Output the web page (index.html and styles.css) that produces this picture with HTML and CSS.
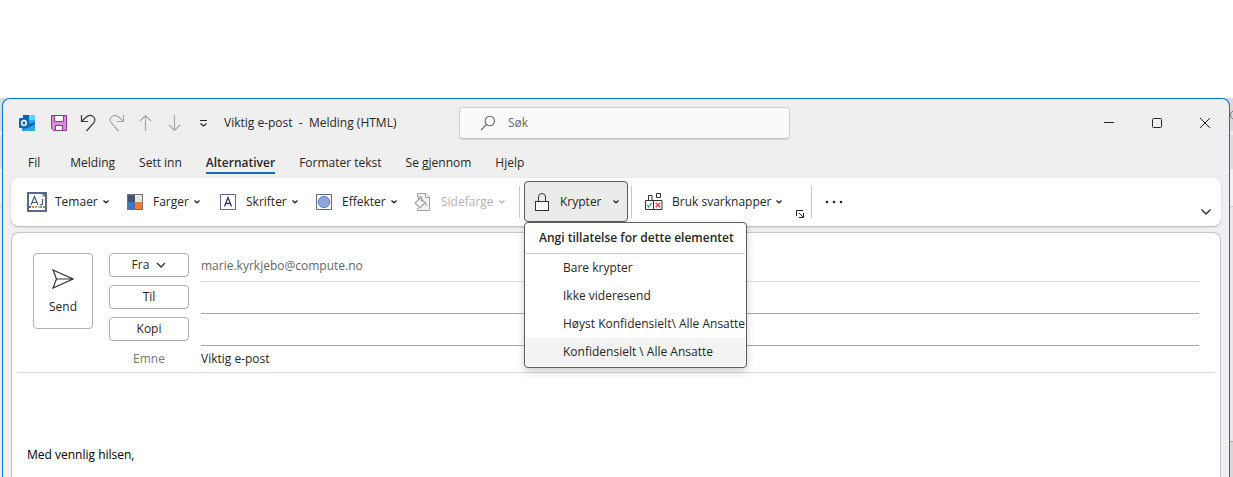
FILE: index.html
```html
<!DOCTYPE html>
<html lang="no">
<head>
<meta charset="utf-8">
<title>Viktig e-post - Melding (HTML)</title>
<link rel="stylesheet" href="styles.css">
</head>
<body>
<svg class="defs" aria-hidden="true">
  <symbol id="chevron" viewBox="0 0 8 8"><path d="M1.500 2.500 4 4.800 6.500 2.500" fill="none" stroke="currentColor" stroke-width="1.300"/></symbol>
</svg>
<div class="desktop">
<main class="window">
  <header class="titlebar">
    <svg class="app-logo" viewBox="0 0 16 16" aria-hidden="true">
      <rect x="4" y="0" width="12" height="8" fill="#28a8ea"/><rect x="4" y="0" width="6" height="5" fill="#0364b8"/><rect x="10" y="0" width="6" height="5" fill="#50d9ff"/><rect x="4" y="5" width="6" height="5" fill="#0078d4"/>
      <path d="M3 8h13v7a1 1 0 0 1-1 1H4a1 1 0 0 1-1-1z" fill="#1490df"/><path d="M16 7v8.500L7 10.500z" fill="#0f5fa8"/><path d="M4 16 16 9v6a1 1 0 0 1-1 1z" fill="#28a8ea"/>
      <rect x="0" y="3" width="10" height="10" rx="1" fill="#0f64b4"/><ellipse cx="5" cy="8" rx="2.200" ry="2.500" fill="none" stroke="#fff" stroke-width="1.500"/>
    </svg>
    <div class="quick">
      <button aria-label="Lagre"><svg viewBox="0 0 18 18"><path d="M1.500 1.500h15v15h-13l-2-2z" fill="#d68fd6" stroke="#9332a0"/><path d="M4.500 1.500h9v6h-9z" fill="#fff" stroke="#9332a0"/><path d="M5.500 11.500h7v5h-7z" fill="#fff" stroke="#9332a0"/></svg></button>
      <button aria-label="Angre"><svg viewBox="0 0 18 18" fill="none" stroke="#3b3b3b" stroke-width="1.200"><path d="M2.500 1v6.500H9M2.500 7.500 7 3.200c5-4.500 11.500 1 7.500 6L7.500 17"/></svg></button>
      <button aria-label="Gjør om"><svg viewBox="0 0 18 18" fill="none" stroke="#a8a8a8" stroke-width="1.200"><path d="M15.500 1v6.500H9M15.500 7.500 11 3.200c-5-4.500-11.500 1-7.500 6l7 7.800"/></svg></button>
      <button aria-label="Forrige element"><svg viewBox="0 0 18 18" fill="none" stroke="#a8a8a8" stroke-width="1.200"><path d="M8.500 17V1.500M3 7l5.500-5.500L14 7"/></svg></button>
      <button aria-label="Neste element"><svg viewBox="0 0 18 18" fill="none" stroke="#a8a8a8" stroke-width="1.200"><path d="M8.500 1v15.500M3 11l5.500 5.500L14 11"/></svg></button>
      <button aria-label="Tilpass verktøylinjen"><svg viewBox="0 0 18 18" fill="none" stroke="#262626" stroke-width="1.200"><path d="M5 6.500h7M5.500 9.500l3 2.500 3-2.500"/></svg></button>
    </div>
    <h1 class="title">Viktig e-post&nbsp; -&nbsp; Melding (HTML)</h1>
    <label class="search">
      <svg viewBox="0 0 16 16" fill="none" stroke="#666" stroke-width="1.100"><circle cx="9.800" cy="6" r="4.700"/><path d="M6.500 9.500 1 15"/></svg>
      <input type="text" placeholder="Søk" aria-label="Søk">
    </label>
    <div class="controls">
      <button aria-label="Minimer"><svg viewBox="0 0 12 12"><path d="M1 5.500h10"/></svg></button>
      <button aria-label="Maksimer"><svg viewBox="0 0 12 12"><rect x="1.500" y="1.500" width="9" height="9" rx="1"/></svg></button>
      <button aria-label="Lukk"><svg viewBox="0 0 12 12"><path d="m1 1 10 10M11 1 1 11"/></svg></button>
    </div>
  </header>

  <nav class="tabs">
    <button class="file">Fil</button><button>Melding</button><button>Sett inn</button><button class="active">Alternativer</button><button>Formater tekst</button><button>Se gjennom</button><button>Hjelp</button>
  </nav>

  <section class="ribbon" aria-label="Alternativer">
    <button class="cmd themes">
      <svg class="icon" viewBox="0 0 20 20"><path d="M0 0h20v20H0z" fill="#596a86"/><path d="M2 2h13l3 3v13H2z" fill="#fff"/><path d="M15 2v3h3z" fill="#b8c1cf"/><path d="m4 13 3.500-8.500L11 13M5 10.500h5M15.500 7v4.500q0 2-2.500 1" fill="none" stroke="#44546a" stroke-width="1.100"/><path d="M2 14h2v2H2z" fill="#4472c4"/><path d="M5 14h2v2H5z" fill="#ed7d31"/><path d="M8 14h2v2H8z" fill="#a5a5a5"/><path d="M11 14h2v2h-2z" fill="#ffc000"/><path d="M13 14h2v2h-2z" fill="#5b9bd5"/><path d="M16 14h2v2h-2z" fill="#70ad47"/></svg>
      <span>Temaer</span><svg class="chev"><use href="#chevron"/></svg></button>
    <button class="cmd colors">
      <svg class="icon" viewBox="0 0 16 16"><path d="M0 0h16v16H0z" fill="#737373"/><path d="M1 1h7v7H1z" fill="#44546a"/><path d="M8 1h7v7H8z" fill="#e7e6e6"/><path d="M1 8h7v7H1z" fill="#4472c4"/><path d="M8 8h7v7H8z" fill="#ed7d31"/></svg>
      <span>Farger</span><svg class="chev"><use href="#chevron"/></svg></button>
    <button class="cmd fonts">
      <svg class="icon" viewBox="0 0 16 16"><path d="M.5.5h15v15H.5z" fill="#fff" stroke="#596a86"/><path d="m4.500 12.500 3.500-9 3.500 9M5.500 9.500h5" fill="none" stroke="#333b52" stroke-width="1.300"/></svg>
      <span>Skrifter</span><svg class="chev"><use href="#chevron"/></svg></button>
    <button class="cmd effects">
      <svg class="icon" viewBox="0 0 16 16"><path d="M.5.5h15v15H.5z" fill="#fff" stroke="#596a86"/><circle cx="8" cy="8" r="5.700" fill="#8fa5dc" stroke="#5f7fca"/></svg>
      <span>Effekter</span><svg class="chev"><use href="#chevron"/></svg></button>
    <button class="cmd page" disabled>
      <svg class="icon" viewBox="0 0 18 18" fill="none" stroke="#a0a0a0"><path d="M3.500 4V.5H12l3.500 3.500v13.500h-12V15" fill="#f3f3f3"/><path d="M11.500.5v4h4" fill="#fff"/><path d="m1 10 5.500-5 4.500 4.500L6 15zM4.500 7V4.500q1.500-2.500 3 0V9M11 9q1.500 1.500 1 4" stroke-width="1.200" fill="#fff"/></svg>
      <span>Sidefarge</span><svg class="chev"><use href="#chevron"/></svg></button>
    <span class="sep"></span>
    <div class="dropdown">
      <button class="cmd encrypt" aria-expanded="true">
        <svg class="icon" viewBox="0 0 16 20" fill="none" stroke="#333"><rect x="1.500" y="9.500" width="13" height="9" fill="#fafafa"/><path d="M4.500 9V5q0-3.500 3.500-3.500T11.500 5v4"/></svg>
        <span>Krypter</span><svg class="chev"><use href="#chevron"/></svg></button>
      <div class="menu" role="menu">
        <h2>Angi tillatelse for dette elementet</h2>
        <button role="menuitem">Bare krypter</button>
        <button role="menuitem">Ikke videresend</button>
        <button role="menuitem">Høyst Konfidensielt\ Alle Ansatte</button>
        <button role="menuitem" class="hover">Konfidensielt \ Alle Ansatte</button>
      </div>
    </div>
    <span class="sep"></span>
    <button class="cmd voting">
      <svg class="icon" viewBox="0 0 18 20" fill="none" stroke="#333"><path d="M.5 8.500h8v9h-8zM8.500 8.500h8.500v9H8.500z" fill="#fff"/><path d="M3.500 8V3.500h3.500V8M11.500 1.500h4v4h-4z"/><path d="m2.200 13 1.500 2 3-4" stroke="#2ba24c" stroke-width="1.200"/><path d="m10.700 10.700 4.500 4.500m0-4.500-4.500 4.500" stroke="#ee3f43" stroke-width="1.300"/></svg>
      <span>Bruk svarknapper</span><svg class="chev"><use href="#chevron"/></svg></button>
    <button class="launcher" aria-label="Flere alternativer"><svg viewBox="0 0 8 8" fill="none" stroke="#262626"><path d="M.5 6V.5H7M3 3l4 4M7.500 3v4.500H3"/></svg></button>
    <span class="sep"></span>
    <button class="more" aria-label="Flere kommandoer"><svg viewBox="0 0 18 4" fill="#262626"><circle cx="2" cy="2" r="1.300"/><circle cx="9" cy="2" r="1.300"/><circle cx="16" cy="2" r="1.300"/></svg></button>
    <button class="collapse" aria-label="Skjul båndet"><svg viewBox="0 0 12 8" fill="none" stroke="#262626" stroke-width="1.300"><path d="m1.500 1.500 4.500 4.500 4.500-4.500"/></svg></button>
  </section>

  <section class="message">
    <div class="fields">
      <button class="send"><svg viewBox="0 0 22 20" fill="none" stroke="#333" stroke-width="1.200"><path d="m1 1 20 9L1 19l3.500-9zM4.500 10H21"/></svg>Send</button>
      <button class="pick">Fra <svg viewBox="0 0 10 8" fill="none" stroke="#333" stroke-width="1.400"><path d="m1 2 4 4 4-4"/></svg></button>
      <div class="value from">marie.kyrkjebo@compute.no</div>
      <button class="pick">Til</button>
      <input class="value" type="text" aria-label="Til">
      <button class="pick">Kopi</button>
      <input class="value" type="text" aria-label="Kopi">
      <label class="subject-label" for="subject">Emne</label>
      <input class="value subject" id="subject" type="text" value="Viktig e-post">
    </div>
    <p class="body">Med vennlig hilsen,</p>
  </section>
</main>
<div class="behind" aria-hidden="true"><svg viewBox="0 0 3 12" fill="none" stroke="#777"><circle cx="5" cy="6" r="4.500"/></svg></div>
</div>
</body>
</html>
```
FILE: styles.css
```css
* { box-sizing: border-box; }
body {
  margin: 0;
  padding-top: 98px;
  background: #fff;
  color: #262626;
  font: 12px/16px "Open Sans", "Noto Sans", sans-serif;
}
button, input { font: inherit; color: inherit; background: none; border: 0; padding: 0; margin: 0; }
button { display: inline-flex; align-items: center; white-space: nowrap; }
svg { display: block; flex: none; }
.defs { display: none; }

.desktop {
  display: grid;
  grid-template-columns: 1fr 3px;
  min-height: calc(100vh - 98px);
  padding-left: 2px;
  background: linear-gradient(#dadade 33px, #ececec 33px 37px, #dcdcde 37px 71px, #f0f0f0 71px 108px, #c8c8c8 108px 109px, #ececec 109px);
}
.behind {
  padding-top: 11px;
  background: linear-gradient(#dadade 33px, #ececec 33px 37px, #dcdcde 37px 71px, #f0f0f0 71px 108px, #c8c8c8 108px 109px, #e8e6e6 109px 343px, #a8a8a8 343px 344px, #d8d6d6 344px);
}
.behind svg { width: 3px; height: 12px; }
.window {
  display: flex;
  flex-direction: column;
  min-width: 0;
  background: #efefef;
  border: 1px solid #0078d4;
  border-bottom: 0;
  border-radius: 8px 8px 0 0;
}

.titlebar { display: flex; align-items: center; height: 48px; padding-left: 16px; }
.app-logo { width: 16px; height: 16px; }
.quick { display: flex; gap: 11px; margin-left: 15px; }
.quick button, .quick svg { width: 18px; height: 18px; }
.title { margin: 0 0 0 11px; width: 235px; font-size: 12px; line-height: 18px; font-weight: 400; white-space: nowrap; }
.search {
  display: flex;
  align-items: center;
  gap: 12px;
  width: 331px;
  height: 32px;
  padding: 0 20px;
  background: #fafafa;
  border: 1px solid #d0d0d0;
  border-bottom-color: #bdbdbd;
  border-radius: 4px;
  box-shadow: 0 1px 1px #0000001a;
}
.search svg { width: 16px; height: 16px; }
.search input { flex: 1; min-width: 0; outline: 0; }
.search input::placeholder { color: #6b6b6b; opacity: 1; }
.controls { display: flex; margin-left: auto; }
.controls button { width: 48px; height: 32px; justify-content: center; }
.controls svg { width: 12px; height: 12px; fill: none; stroke: #262626; stroke-width: 1; }

.tabs { display: flex; gap: 24px; height: 31px; padding-left: 25px; align-items: flex-start; }
.tabs button { height: 27px; padding-top: 6px; border-bottom: 2px solid transparent; }
.tabs .file { margin-right: 6px; }
.tabs .active { font-weight: 600; border-bottom-color: #0f6cbd; }

.ribbon {
  display: flex;
  align-items: center;
  height: 48px;
  margin: 0 8px;
  padding: 0 9px 0 16px;
  background: #fff;
  border-radius: 8px;
  box-shadow: 0 1px 2px #00000040;
}
.cmd { height: 40px; }
.icon { width: 16px; height: 16px; margin-right: 10px; }
.chev { width: 8px; height: 8px; margin-left: 4px; }
.themes { width: 100px; }
.themes .icon { width: 20px; height: 20px; margin-right: 8px; }
.colors { width: 93px; }
.fonts { width: 96px; }
.effects { width: 98px; }
.page { width: 105px; color: #b3b3b3; }
.page .icon, .voting .icon { width: 18px; height: 18px; margin-right: 9px; }
.voting .icon { height: 20px; }
.sep { width: 1px; height: 32px; background: #c8c8c8; }
.dropdown { position: relative; align-self: flex-start; margin: 3px 3px 0 4px; }
.encrypt { width: 104px; height: 41px; padding: 0 7px 0 9px; background: #ebebeb; border: 1px solid #5c5c5c; border-radius: 4px; }
.encrypt .icon { height: 20px; }
.encrypt .chev { margin-left: auto; }
.menu {
  position: absolute;
  z-index: 1;
  top: 100%;
  left: 0;
  width: 223px;
  padding: 0 1px 1px;
  background: #fff;
  border: 1px solid #5c5c5c;
  border-radius: 4px;
  box-shadow: 0 4px 8px #0000002e;
}
.menu h2 { margin: 0; height: 31px; padding-left: 13px; font-size: 12px; line-height: 30px; font-weight: 600; border-bottom: 1px solid #c8c8c8; white-space: nowrap; }
.menu button { display: flex; width: 100%; height: 28px; padding-left: 37px; }
.menu .hover { background: #f3f3f3; }
.voting { margin-left: 13px; }
.launcher { align-self: flex-end; margin: 0 7px 8px 13px; }
.launcher svg { width: 8px; height: 8px; }
.more { margin-left: 13px; }
.more svg { width: 18px; height: 4px; }
.collapse { align-self: flex-end; margin: 0 0 10px auto; }
.collapse svg { width: 12px; height: 8px; }

.message {
  flex: 1;
  margin: 6px 8px 0;
  padding: 0 5px;
  background: #fff;
  border: 1px solid #c8c8c8;
  border-bottom: 0;
  border-radius: 8px 8px 0 0;
}
.fields {
  display: grid;
  grid-template-columns: 60px 80px 1fr;
  grid-template-rows: repeat(3, 32px) 26px;
  column-gap: 16px;
  align-items: center;
  padding: 17px 12px 0 16px;
  border-bottom: 1px solid #dcdcdc;
}
.send {
  grid-row: 1 / 5;
  align-self: start;
  flex-direction: column;
  gap: 10px;
  height: 76px;
  margin-top: 3px;
  padding-top: 15px;
  border: 1px solid #b0b0b0;
  border-radius: 4px;
}
.send svg { width: 22px; height: 20px; }
.pick { align-self: start; height: 24px; margin-top: 3px; justify-content: center; gap: 7px; border: 1px solid #b0b0b0; border-radius: 4px; }
.pick svg { width: 10px; height: 8px; }
.value { align-self: stretch; width: 100%; min-width: 0; margin-left: -4px; border-bottom: 1px solid #ababab; outline: 0; }
.from { display: flex; align-items: center; color: #666; border-bottom-color: #dcdcdc; }
.subject { border-bottom: 0; }
.subject-label { text-align: center; color: #767676; }
.body { margin: 74px 10px 16px; color: #000; }
```
